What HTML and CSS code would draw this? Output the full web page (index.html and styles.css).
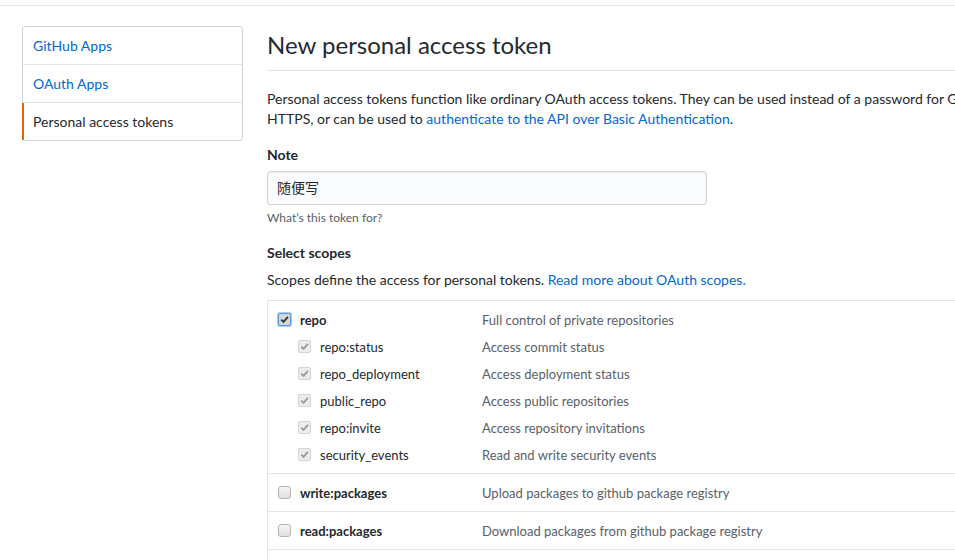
FILE: index.html
```html
<!DOCTYPE html>
<html>
<head>
<meta charset="utf-8">
<link rel="stylesheet" href="styles.css">
</head>
<body>
<div class="header"></div>
<div class="container">
  <nav class="menu">
    <a class="menu-item">GitHub Apps</a>
    <a class="menu-item">OAuth Apps</a>
    <a class="menu-item selected">Personal access tokens</a>
  </nav>
  <main class="main">
    <h2 class="subhead">New personal access token</h2>
    <p class="intro">Personal access tokens function like ordinary OAuth access tokens. They can be used instead of a password for Git over<br>HTTPS, or can be used to <a class="link">authenticate to the API over Basic Authentication</a>.</p>
    <div class="field">
      <label class="label">Note</label>
      <div class="input">随便写</div>
      <p class="note">What’s this token for?</p>
    </div>
    <h3 class="label scopes-title">Select scopes</h3>
    <p class="scopes-desc">Scopes define the access for personal tokens. <a class="link">Read more about OAuth scopes.</a></p>
    <div class="scopes">
      <div class="group">
        <div class="row">
          <span class="cb cb-focus"><svg viewBox="0 0 11 11"><path d="M2.2 5.6 L4.5 7.9 L8.9 2.8" fill="none" stroke="#333" stroke-width="1.8"/></svg></span>
          <span class="name bold">repo</span>
          <span class="desc">Full control of private repositories</span>
        </div>
        <div class="row sub">
          <span class="cb cb-dis"><svg viewBox="0 0 11 11"><path d="M2.2 5.6 L4.5 7.9 L8.9 2.8" fill="none" stroke="#9a9a9a" stroke-width="1.8"/></svg></span>
          <span class="name">repo:status</span>
          <span class="desc">Access commit status</span>
        </div>
        <div class="row sub">
          <span class="cb cb-dis"><svg viewBox="0 0 11 11"><path d="M2.2 5.6 L4.5 7.9 L8.9 2.8" fill="none" stroke="#9a9a9a" stroke-width="1.8"/></svg></span>
          <span class="name">repo_deployment</span>
          <span class="desc">Access deployment status</span>
        </div>
        <div class="row sub">
          <span class="cb cb-dis"><svg viewBox="0 0 11 11"><path d="M2.2 5.6 L4.5 7.9 L8.9 2.8" fill="none" stroke="#9a9a9a" stroke-width="1.8"/></svg></span>
          <span class="name">public_repo</span>
          <span class="desc">Access public repositories</span>
        </div>
        <div class="row sub">
          <span class="cb cb-dis"><svg viewBox="0 0 11 11"><path d="M2.2 5.6 L4.5 7.9 L8.9 2.8" fill="none" stroke="#9a9a9a" stroke-width="1.8"/></svg></span>
          <span class="name">repo:invite</span>
          <span class="desc">Access repository invitations</span>
        </div>
        <div class="row sub">
          <span class="cb cb-dis"><svg viewBox="0 0 11 11"><path d="M2.2 5.6 L4.5 7.9 L8.9 2.8" fill="none" stroke="#9a9a9a" stroke-width="1.8"/></svg></span>
          <span class="name">security_events</span>
          <span class="desc">Read and write security events</span>
        </div>
      </div>
      <div class="group">
        <div class="row">
          <span class="cb cb-empty"></span>
          <span class="name bold">write:packages</span>
          <span class="desc">Upload packages to github package registry</span>
        </div>
      </div>
      <div class="group">
        <div class="row">
          <span class="cb cb-empty"></span>
          <span class="name bold">read:packages</span>
          <span class="desc">Download packages from github package registry</span>
        </div>
      </div>
      <div class="group group-rest"></div>
    </div>
  </main>
</div>
</body>
</html>
```
FILE: styles.css
```css
html, body {
  margin: 0;
  padding: 0;
  overflow: hidden;
  background: #fff;
}
body {
  font-family: Lato, "Liberation Sans", Arial, sans-serif;
  font-size: 14px;
  line-height: 20px;
  color: #24292e;
  width: 955px;
  height: 560px;
}
.header {
  height: 5px;
  border-bottom: 1px solid #e1e4e8;
}
.container {
  display: flex;
  align-items: flex-start;
  gap: 24px;
  padding: 20px 0 0 22px;
  width: 1100px;
}
.menu {
  width: 221px;
  box-sizing: border-box;
  flex: none;
  border: 1px solid #d1d5da;
  border-radius: 3px;
  display: flex;
  flex-direction: column;
}
.menu-item {
  display: block;
  padding: 8px 10px;
  line-height: 21px;
  color: #0366d6;
  border-bottom: 1px solid #e1e4e8;
}
.menu-item:last-child {
  border-bottom: none;
}
.menu-item.selected {
  color: #24292e;
  border-left: 2px solid #e36209;
  margin-left: -1px;
  padding-left: 9px;
}
.main {
  width: 800px;
  flex: none;
}
.subhead {
  margin: 4px 0 0 0;
  padding-bottom: 10px;
  font-size: 24px;
  line-height: 30px;
  font-weight: 400;
  border-bottom: 1px solid #e1e4e8;
}
.intro {
  margin: 18px 0 0 0;
  white-space: nowrap;
}
.link {
  color: #0366d6;
}
.field {
  margin-top: 16px;
}
.label {
  display: block;
  font-weight: 700;
  font-size: 14px;
  line-height: 20px;
  margin: 0;
}
.input {
  margin-top: 6px;
  width: 440px;
  height: 34px;
  box-sizing: border-box;
  border: 1px solid #d1d5da;
  border-radius: 3px;
  background: #fafbfc;
  padding: 6px 9px;
  line-height: 20px;
  font-family: Lato, "Noto Sans CJK SC", sans-serif;
  box-shadow: inset 0 1px 2px rgba(27, 31, 35, 0.075);
}
.note {
  margin: 4px 0 0 0;
  font-size: 12px;
  line-height: 18px;
  color: #586069;
}
.scopes-title {
  margin-top: 16px;
}
.scopes-desc {
  margin: 7px 0 0 0;
}
.scopes {
  margin-top: 10px;
  border-top: 1px solid #e1e4e8;
  border-left: 1px solid #e1e4e8;
}
.group {
  padding: 9px 0 8px 10px;
  border-bottom: 1px solid #e1e4e8;
  display: flex;
  flex-direction: column;
  gap: 7px;
}
.group-rest {
  height: 20px;
  border-bottom: none;
}
.row {
  display: grid;
  grid-template-columns: 22px 182px 1fr;
  align-items: center;
  font-size: 13px;
  line-height: 20px;
}
.row.sub {
  margin-left: 20px;
  grid-template-columns: 22px 162px 1fr;
}
.name.bold {
  font-weight: 700;
}
.desc {
  color: #586069;
}
.cb {
  width: 13px;
  height: 13px;
  box-sizing: border-box;
  border-radius: 2px;
  display: block;
  position: relative;
  top: -1px;
}
.cb svg {
  display: block;
  width: 11px;
  height: 11px;
}
.cb-focus {
  border: 1px solid #5a9ae0;
  box-shadow: 0 0 0 1px #a9cdf3;
  background: #d6d6d6;
}
.cb-dis {
  border: 1px solid #d4d4d4;
  background: #ececec;
}
.cb-empty {
  border: 1px solid #b4b4b4;
  border-radius: 3px;
  background: linear-gradient(#f6f6f6, #dedede);
}
```
